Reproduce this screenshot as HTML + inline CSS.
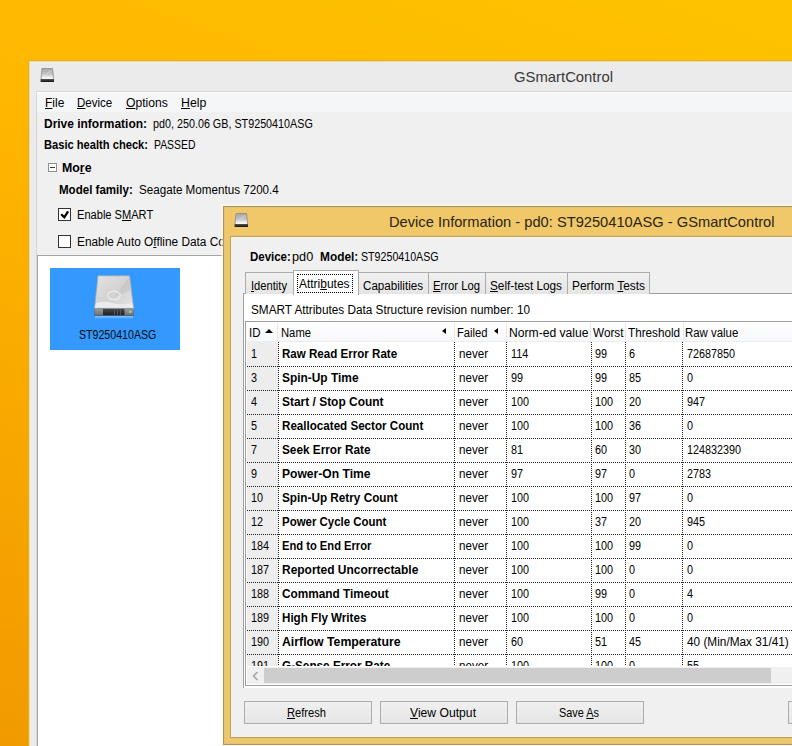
<!DOCTYPE html>
<html><head><meta charset="utf-8"><style>
html,body{margin:0;padding:0;}
body{width:792px;height:746px;overflow:hidden;position:relative;font-family:"Liberation Sans",sans-serif;color:#000;
background:linear-gradient(200deg,#FEC300 0%,#FFB800 35%,#F8A700 70%,#F09A00 100%);}
.t{position:absolute;white-space:pre;transform-origin:0 0;}
.r{position:absolute;}
u{text-decoration:underline;text-underline-offset:1px;}
</style></head><body>
<div class="r" style="left:28px;top:60px;width:800px;height:700px;background:#E0AE2C;"></div>
<div class="r" style="left:29px;top:61px;width:800px;height:700px;background:#EEDAA4;"></div>
<div class="r" style="left:30px;top:62px;width:800px;height:700px;background:#F3EEE0;"></div>
<div class="r" style="left:31px;top:63px;width:800px;height:700px;background:#EBEBEB;"></div>
<svg class="r" style="left:39px;top:67px" width="16" height="16" viewBox="0 0 16 16">
<defs><linearGradient id="sg39" x1="0" y1="0" x2="0" y2="1"><stop offset="0" stop-color="#a5a5a5"/><stop offset="0.55" stop-color="#c8c8c8"/><stop offset="0.8" stop-color="#f0f0f0"/><stop offset="1" stop-color="#fafafa"/></linearGradient>
<linearGradient id="sb39" x1="0" y1="0" x2="0" y2="1"><stop offset="0" stop-color="#555"/><stop offset="1" stop-color="#111"/></linearGradient></defs>
<path d="M3 1.5 H13.6 L14.6 12.5 H2 Z" fill="url(#sg39)" stroke="#8a8a8a" stroke-width="0.8"/>
<path d="M4 10 L12.5 3" stroke="#dcdcdc" stroke-width="0.9" opacity="0.8"/>
<rect x="1.6" y="12" width="13.4" height="3" fill="url(#sb39)"/>
</svg>
<div class="t" style="left:513.80px;top:68.30px;font-size:15px;line-height:17px;color:#383838;transform:scaleX(0.9897);">GSmartControl</div>
<div class="r" style="left:36px;top:91px;width:800px;height:700px;background:#D7D7D7;"></div>
<div class="r" style="left:37px;top:92px;width:800px;height:700px;background:#F0F0F0;"></div>
<div class="r" style="left:37px;top:92px;width:800px;height:20px;background:#F5F6F7;"></div>
<div class="r" style="left:37px;top:92px;width:800px;height:1px;background:#FFFFFF;"></div>
<div class="t" style="left:44.80px;top:95.54px;font-size:12px;line-height:14px;transform:scaleX(0.9982);"><u>F</u>ile</div>
<div class="t" style="left:76.70px;top:95.54px;font-size:12px;line-height:14px;transform:scaleX(0.9597);"><u>D</u>evice</div>
<div class="t" style="left:125.70px;top:95.54px;font-size:12px;line-height:14px;transform:scaleX(1.0108);"><u>O</u>ptions</div>
<div class="t" style="left:181.30px;top:95.54px;font-size:12px;line-height:14px;transform:scaleX(1.0252);"><u>H</u>elp</div>
<div class="t" style="left:43.50px;top:116.84px;font-size:12px;line-height:14px;font-weight:bold;transform:scaleX(0.9967);">Drive information:</div>
<div class="t" style="left:153.10px;top:116.84px;font-size:12px;line-height:14px;transform:scaleX(0.8971);">pd0, 250.06 GB, ST9250410ASG</div>
<div class="t" style="left:43.50px;top:137.84px;font-size:12px;line-height:14px;font-weight:bold;transform:scaleX(0.9282);">Basic health check:</div>
<div class="t" style="left:154.10px;top:137.84px;font-size:12px;line-height:14px;transform:scaleX(0.8682);">PASSED</div>
<div class="r" style="left:48px;top:163px;width:9px;height:9px;box-sizing:border-box;border:1px solid #8E8E8E;background:#fff;"></div>
<div class="r" style="left:50px;top:167px;width:5px;height:1px;background:#3a3a3a;"></div>
<div class="t" style="left:62.10px;top:161.44px;font-size:12px;line-height:14px;font-weight:bold;transform:scaleX(1.0289);">Mo<u>r</u>e</div>
<div class="t" style="left:58.50px;top:183.04px;font-size:12px;line-height:14px;font-weight:bold;transform:scaleX(0.9625);">Model family:</div>
<div class="t" style="left:138.80px;top:183.04px;font-size:12px;line-height:14px;transform:scaleX(0.9702);">Seagate Momentus 7200.4</div>
<div class="r" style="left:58px;top:208px;width:13px;height:13px;box-sizing:border-box;border:1px solid #333;background:#fff;"></div>
<svg class="r" style="left:58px;top:208px" width="13" height="13" viewBox="0 0 13 13"><path d="M3.2 6.3 L6.3 9.3 L10.1 3.3" fill="none" stroke="#000" stroke-width="2.2" stroke-linejoin="miter"/></svg>
<div class="t" style="left:76.90px;top:207.74px;font-size:12px;line-height:14px;transform:scaleX(0.9238);">Enable S<u>M</u>ART</div>
<div class="r" style="left:58px;top:235px;width:13px;height:13px;box-sizing:border-box;border:1px solid #333;background:#fff;"></div>
<div class="t" style="left:76.90px;top:234.64px;font-size:12px;line-height:14px;transform:scaleX(0.9860);">Enable Auto O<u>f</u>fline Data Collection</div>
<div class="r" style="left:37px;top:255px;width:800px;height:700px;background:#A5A5A5;"></div>
<div class="r" style="left:38px;top:256px;width:800px;height:700px;background:#FFFFFF;"></div>
<div class="r" style="left:50px;top:268px;width:130px;height:82px;background:#3399FF;"></div>
<svg class="r" style="left:90px;top:272px" width="48" height="50" viewBox="0 0 48 50">
<defs>
<linearGradient id="bt" x1="0" y1="0" x2="1" y2="1"><stop offset="0" stop-color="#e4e4e4"/><stop offset="0.5" stop-color="#d2d2d2"/><stop offset="1" stop-color="#e2e2e2"/></linearGradient>
<linearGradient id="bf" x1="0" y1="0" x2="0" y2="1"><stop offset="0" stop-color="#4a4a4a"/><stop offset="1" stop-color="#1e1e1e"/></linearGradient>
<linearGradient id="be" x1="0" y1="0" x2="0" y2="1"><stop offset="0" stop-color="#9c9c9c"/><stop offset="1" stop-color="#6f6f6f"/></linearGradient>
<linearGradient id="br" x1="0" y1="0" x2="0" y2="1"><stop offset="0" stop-color="#ffffff" stop-opacity="0.45"/><stop offset="1" stop-color="#ffffff" stop-opacity="0"/></linearGradient>
</defs>
<path d="M8 3.8 H39.6 L43.6 36 H4.6 Z" fill="url(#bt)" stroke="#a8a8a8" stroke-width="0.7"/>
<path d="M24 25 L39.5 5 L41 18 Z" fill="#c4c4c4" opacity="0.7"/>
<ellipse cx="24" cy="23.5" rx="6.3" ry="4.3" fill="none" stroke="#eeeeee" stroke-width="1.1"/>
<path d="M6 31 Q14 28.5 22 31 T42 31 L43.3 35.5 H4.9 Z" fill="#ececec"/>
<rect x="4.6" y="35.6" width="39" height="1" fill="#fafafa"/>
<rect x="4.6" y="36.5" width="39" height="7" fill="url(#bf)"/>
<rect x="4.6" y="36.5" width="8.4" height="7" fill="url(#be)"/>
<rect x="34.4" y="36.5" width="9.2" height="7" fill="url(#be)"/>
<rect x="24" y="37" width="1" height="6" fill="#555"/><rect x="27" y="37" width="1" height="6" fill="#555"/><rect x="30" y="37" width="1" height="6" fill="#555"/>
<circle cx="40.3" cy="39.8" r="1.3" fill="#9be38a"/>
<rect x="5" y="44" width="38" height="3" fill="url(#br)"/>
</svg>
<div class="t" style="left:78.50px;top:328.34px;font-size:12px;line-height:14px;color:#0a0a0a;transform:scaleX(0.8845);">ST9250410ASG</div>
<div class="r" style="left:221px;top:204px;width:800px;height:543px;background:rgba(255,248,232,0.6);"></div>
<div class="r" style="left:223px;top:206px;width:800px;height:539px;background:#AD9560;"></div>
<div class="r" style="left:224px;top:207px;width:800px;height:537px;background:#E2C274;"></div>
<div class="r" style="left:225px;top:208px;width:800px;height:535px;background:#F0C869;"></div>
<svg class="r" style="left:233px;top:212px" width="16" height="16" viewBox="0 0 16 16">
<defs><linearGradient id="sg233" x1="0" y1="0" x2="0" y2="1"><stop offset="0" stop-color="#a5a5a5"/><stop offset="0.55" stop-color="#c8c8c8"/><stop offset="0.8" stop-color="#f0f0f0"/><stop offset="1" stop-color="#fafafa"/></linearGradient>
<linearGradient id="sb233" x1="0" y1="0" x2="0" y2="1"><stop offset="0" stop-color="#555"/><stop offset="1" stop-color="#111"/></linearGradient></defs>
<path d="M3 1.5 H13.6 L14.6 12.5 H2 Z" fill="url(#sg233)" stroke="#8a8a8a" stroke-width="0.8"/>
<path d="M4 10 L12.5 3" stroke="#dcdcdc" stroke-width="0.9" opacity="0.8"/>
<rect x="1.6" y="12" width="13.4" height="3" fill="url(#sb233)"/>
</svg>
<div class="t" style="left:389.10px;top:213.00px;font-size:15px;line-height:17px;color:#2a2416;transform:scaleX(0.9776);">Device Information - pd0: ST9250410ASG - GSmartControl</div>
<div class="r" style="left:229px;top:235px;width:800px;height:504px;background:#E3C47A;"></div>
<div class="r" style="left:230px;top:236px;width:800px;height:502px;background:#BFA062;"></div>
<div class="r" style="left:231px;top:237px;width:800px;height:500px;background:#FFF5DC;"></div>
<div class="r" style="left:232px;top:238px;width:800px;height:498px;background:#F2F1EC;"></div>
<div class="r" style="left:233px;top:239px;width:800px;height:496px;background:#F0F0F0;"></div>
<div class="t" style="left:249.60px;top:250.04px;font-size:12px;line-height:14px;font-weight:bold;transform:scaleX(0.9557);">Device:</div>
<div class="t" style="left:291.80px;top:250.04px;font-size:12px;line-height:14px;transform:scaleX(1.0589);">pd0</div>
<div class="t" style="left:320.30px;top:250.04px;font-size:12px;line-height:14px;font-weight:bold;transform:scaleX(0.9907);">Model:</div>
<div class="t" style="left:360.70px;top:250.04px;font-size:12px;line-height:14px;transform:scaleX(0.8880);">ST9250410ASG</div>
<div class="r" style="left:243px;top:293px;width:800px;height:395px;background:#A0A0A0;"></div>
<div class="r" style="left:244px;top:294px;width:800px;height:394px;background:#FFFFFF;"></div>
<div class="r" style="left:245px;top:272px;width:49px;height:22px;box-sizing:border-box;border:1px solid #ACACAC;border-bottom:none;background:linear-gradient(#F0F0F0,#E5E5E5);"></div>
<div class="t" style="left:251.00px;top:278.54px;font-size:12px;line-height:14px;transform:scaleX(0.9305);"><u>I</u>dentity</div>
<div class="r" style="left:358px;top:272px;width:71px;height:22px;box-sizing:border-box;border:1px solid #ACACAC;border-bottom:none;background:linear-gradient(#F0F0F0,#E5E5E5);"></div>
<div class="t" style="left:362.80px;top:278.54px;font-size:12px;line-height:14px;transform:scaleX(0.9673);">Capabilities</div>
<div class="r" style="left:428px;top:272px;width:58px;height:22px;box-sizing:border-box;border:1px solid #ACACAC;border-bottom:none;background:linear-gradient(#F0F0F0,#E5E5E5);"></div>
<div class="t" style="left:433.30px;top:278.54px;font-size:12px;line-height:14px;transform:scaleX(0.9396);"><u>E</u>rror Log</div>
<div class="r" style="left:485px;top:272px;width:83px;height:22px;box-sizing:border-box;border:1px solid #ACACAC;border-bottom:none;background:linear-gradient(#F0F0F0,#E5E5E5);"></div>
<div class="t" style="left:490.30px;top:278.54px;font-size:12px;line-height:14px;transform:scaleX(0.9813);"><u>S</u>elf-test Logs</div>
<div class="r" style="left:567px;top:272px;width:83px;height:22px;box-sizing:border-box;border:1px solid #ACACAC;border-bottom:none;background:linear-gradient(#F0F0F0,#E5E5E5);"></div>
<div class="t" style="left:572.30px;top:278.54px;font-size:12px;line-height:14px;transform:scaleX(0.9891);">Perform <u>T</u>ests</div>
<div class="r" style="left:293px;top:270px;width:66px;height:25px;box-sizing:border-box;border:1px solid #ACACAC;border-bottom:none;background:#FFFFFF;"></div>
<div class="r" style="left:297px;top:274px;width:56px;height:19px;box-sizing:border-box;border:1px dotted #000;"></div>
<div class="t" style="left:299.30px;top:277.34px;font-size:12px;line-height:14px;transform:scaleX(0.9962);">Attri<u>b</u>utes</div>
<div class="t" style="left:250.70px;top:303.34px;font-size:12px;line-height:14px;transform:scaleX(0.9812);">SMART Attributes Data Structure revision number: 10</div>
<div class="r" style="left:245px;top:321px;width:800px;height:365px;background:#A0A0A0;"></div>
<div class="r" style="left:246px;top:322px;width:800px;height:363px;background:#FFFFFF;"></div>
<div class="r" style="left:246px;top:322px;width:800px;height:20px;background:linear-gradient(#FFFFFF,#F7F8FA);"></div>
<div class="r" style="left:277px;top:323px;width:1px;height:18px;background:#E8E8E8;"></div>
<div class="r" style="left:454px;top:323px;width:1px;height:18px;background:#E8E8E8;"></div>
<div class="r" style="left:506px;top:323px;width:1px;height:18px;background:#E8E8E8;"></div>
<div class="r" style="left:590px;top:323px;width:1px;height:18px;background:#E8E8E8;"></div>
<div class="r" style="left:625px;top:323px;width:1px;height:18px;background:#E8E8E8;"></div>
<div class="r" style="left:683px;top:323px;width:1px;height:18px;background:#E8E8E8;"></div>
<div class="r" style="left:246px;top:341px;width:800px;height:1px;background:#EDEDED;"></div>
<div class="t" style="left:248.90px;top:325.54px;font-size:12px;line-height:14px;transform:scaleX(0.9583);">ID</div>
<div class="r" style="left:265px;top:329px;width:0;height:0;border-left:4px solid transparent;border-right:4px solid transparent;border-bottom:4px solid #000;"></div>
<div class="t" style="left:281.20px;top:325.54px;font-size:12px;line-height:14px;transform:scaleX(0.9372);">Name</div>
<div class="r" style="left:442px;top:328px;width:0;height:0;border-top:3.5px solid transparent;border-bottom:3.5px solid transparent;border-right:4px solid #000;"></div>
<div class="t" style="left:456.80px;top:325.54px;font-size:12px;line-height:14px;transform:scaleX(0.9333);">Failed</div>
<div class="r" style="left:494px;top:328px;width:0;height:0;border-top:3.5px solid transparent;border-bottom:3.5px solid transparent;border-right:4px solid #000;"></div>
<div class="t" style="left:508.60px;top:325.54px;font-size:12px;line-height:14px;transform:scaleX(1.0102);">Norm-ed value</div>
<div class="t" style="left:593.30px;top:325.54px;font-size:12px;line-height:14px;transform:scaleX(0.9803);">Worst</div>
<div class="t" style="left:628.10px;top:325.54px;font-size:12px;line-height:14px;transform:scaleX(0.9745);">Threshold</div>
<div class="t" style="left:685.10px;top:325.54px;font-size:12px;line-height:14px;transform:scaleX(0.9514);">Raw value</div>
<div class="r" style="left:246px;top:342px;width:546px;height:324px;overflow:hidden">
<div class="r" style="left:1px;top:0px;width:31px;height:324px;background:#EDEDED;"></div>
<div class="r" style="left:1px;top:24px;width:545px;height:1px;background:repeating-linear-gradient(to right,rgba(0,0,0,0.85) 0 1px,transparent 1px 2px);"></div>
<div class="r" style="left:1px;top:48px;width:545px;height:1px;background:repeating-linear-gradient(to right,rgba(0,0,0,0.85) 0 1px,transparent 1px 2px);"></div>
<div class="r" style="left:1px;top:72px;width:545px;height:1px;background:repeating-linear-gradient(to right,rgba(0,0,0,0.85) 0 1px,transparent 1px 2px);"></div>
<div class="r" style="left:1px;top:96px;width:545px;height:1px;background:repeating-linear-gradient(to right,rgba(0,0,0,0.85) 0 1px,transparent 1px 2px);"></div>
<div class="r" style="left:1px;top:120px;width:545px;height:1px;background:repeating-linear-gradient(to right,rgba(0,0,0,0.85) 0 1px,transparent 1px 2px);"></div>
<div class="r" style="left:1px;top:144px;width:545px;height:1px;background:repeating-linear-gradient(to right,rgba(0,0,0,0.85) 0 1px,transparent 1px 2px);"></div>
<div class="r" style="left:1px;top:168px;width:545px;height:1px;background:repeating-linear-gradient(to right,rgba(0,0,0,0.85) 0 1px,transparent 1px 2px);"></div>
<div class="r" style="left:1px;top:192px;width:545px;height:1px;background:repeating-linear-gradient(to right,rgba(0,0,0,0.85) 0 1px,transparent 1px 2px);"></div>
<div class="r" style="left:1px;top:216px;width:545px;height:1px;background:repeating-linear-gradient(to right,rgba(0,0,0,0.85) 0 1px,transparent 1px 2px);"></div>
<div class="r" style="left:1px;top:240px;width:545px;height:1px;background:repeating-linear-gradient(to right,rgba(0,0,0,0.85) 0 1px,transparent 1px 2px);"></div>
<div class="r" style="left:1px;top:264px;width:545px;height:1px;background:repeating-linear-gradient(to right,rgba(0,0,0,0.85) 0 1px,transparent 1px 2px);"></div>
<div class="r" style="left:1px;top:288px;width:545px;height:1px;background:repeating-linear-gradient(to right,rgba(0,0,0,0.85) 0 1px,transparent 1px 2px);"></div>
<div class="r" style="left:1px;top:312px;width:545px;height:1px;background:repeating-linear-gradient(to right,rgba(0,0,0,0.85) 0 1px,transparent 1px 2px);"></div>
<div class="r" style="left:1px;top:336px;width:545px;height:1px;background:repeating-linear-gradient(to right,rgba(0,0,0,0.85) 0 1px,transparent 1px 2px);"></div>
<div class="r" style="left:32px;top:0px;width:1px;height:324px;background:repeating-linear-gradient(to bottom,rgba(0,0,0,0.85) 0 1px,transparent 1px 2px);"></div>
<div class="r" style="left:208px;top:0px;width:1px;height:324px;background:repeating-linear-gradient(to bottom,rgba(0,0,0,0.85) 0 1px,transparent 1px 2px);"></div>
<div class="r" style="left:260px;top:0px;width:1px;height:324px;background:repeating-linear-gradient(to bottom,rgba(0,0,0,0.85) 0 1px,transparent 1px 2px);"></div>
<div class="r" style="left:345px;top:0px;width:1px;height:324px;background:repeating-linear-gradient(to bottom,rgba(0,0,0,0.85) 0 1px,transparent 1px 2px);"></div>
<div class="r" style="left:379px;top:0px;width:1px;height:324px;background:repeating-linear-gradient(to bottom,rgba(0,0,0,0.85) 0 1px,transparent 1px 2px);"></div>
<div class="r" style="left:436px;top:0px;width:1px;height:324px;background:repeating-linear-gradient(to bottom,rgba(0,0,0,0.85) 0 1px,transparent 1px 2px);"></div>
<div class="t" style="left:5.10px;top:4.54px;font-size:12px;line-height:14px;transform:scaleX(0.9000);">1</div>
<div class="t" style="left:36.30px;top:4.54px;font-size:12px;line-height:14px;font-weight:bold;transform:scaleX(0.9642);">Raw Read Error Rate</div>
<div class="t" style="left:212.80px;top:4.54px;font-size:12px;line-height:14px;transform:scaleX(0.9661);">never</div>
<div class="t" style="left:264.90px;top:4.54px;font-size:12px;line-height:14px;transform:scaleX(0.9000);">114</div>
<div class="t" style="left:348.50px;top:4.54px;font-size:12px;line-height:14px;transform:scaleX(0.9000);">99</div>
<div class="t" style="left:383.30px;top:4.54px;font-size:12px;line-height:14px;transform:scaleX(0.9000);">6</div>
<div class="t" style="left:440.80px;top:4.54px;font-size:12px;line-height:14px;transform:scaleX(0.9000);">72687850</div>
<div class="t" style="left:5.10px;top:28.54px;font-size:12px;line-height:14px;transform:scaleX(0.9000);">3</div>
<div class="t" style="left:36.30px;top:28.54px;font-size:12px;line-height:14px;font-weight:bold;transform:scaleX(0.9920);">Spin-Up Time</div>
<div class="t" style="left:212.80px;top:28.54px;font-size:12px;line-height:14px;transform:scaleX(0.9661);">never</div>
<div class="t" style="left:264.90px;top:28.54px;font-size:12px;line-height:14px;transform:scaleX(0.9000);">99</div>
<div class="t" style="left:348.50px;top:28.54px;font-size:12px;line-height:14px;transform:scaleX(0.9000);">99</div>
<div class="t" style="left:383.30px;top:28.54px;font-size:12px;line-height:14px;transform:scaleX(0.9000);">85</div>
<div class="t" style="left:440.80px;top:28.54px;font-size:12px;line-height:14px;transform:scaleX(0.9000);">0</div>
<div class="t" style="left:5.10px;top:52.54px;font-size:12px;line-height:14px;transform:scaleX(0.9000);">4</div>
<div class="t" style="left:36.30px;top:52.54px;font-size:12px;line-height:14px;font-weight:bold;transform:scaleX(0.9952);">Start / Stop Count</div>
<div class="t" style="left:212.80px;top:52.54px;font-size:12px;line-height:14px;transform:scaleX(0.9661);">never</div>
<div class="t" style="left:264.90px;top:52.54px;font-size:12px;line-height:14px;transform:scaleX(0.9000);">100</div>
<div class="t" style="left:348.50px;top:52.54px;font-size:12px;line-height:14px;transform:scaleX(0.9000);">100</div>
<div class="t" style="left:383.30px;top:52.54px;font-size:12px;line-height:14px;transform:scaleX(0.9000);">20</div>
<div class="t" style="left:440.80px;top:52.54px;font-size:12px;line-height:14px;transform:scaleX(0.9000);">947</div>
<div class="t" style="left:5.10px;top:76.54px;font-size:12px;line-height:14px;transform:scaleX(0.9000);">5</div>
<div class="t" style="left:36.30px;top:76.54px;font-size:12px;line-height:14px;font-weight:bold;transform:scaleX(0.9676);">Reallocated Sector Count</div>
<div class="t" style="left:212.80px;top:76.54px;font-size:12px;line-height:14px;transform:scaleX(0.9661);">never</div>
<div class="t" style="left:264.90px;top:76.54px;font-size:12px;line-height:14px;transform:scaleX(0.9000);">100</div>
<div class="t" style="left:348.50px;top:76.54px;font-size:12px;line-height:14px;transform:scaleX(0.9000);">100</div>
<div class="t" style="left:383.30px;top:76.54px;font-size:12px;line-height:14px;transform:scaleX(0.9000);">36</div>
<div class="t" style="left:440.80px;top:76.54px;font-size:12px;line-height:14px;transform:scaleX(0.9000);">0</div>
<div class="t" style="left:5.10px;top:100.54px;font-size:12px;line-height:14px;transform:scaleX(0.9000);">7</div>
<div class="t" style="left:36.30px;top:100.54px;font-size:12px;line-height:14px;font-weight:bold;transform:scaleX(0.9828);">Seek Error Rate</div>
<div class="t" style="left:212.80px;top:100.54px;font-size:12px;line-height:14px;transform:scaleX(0.9661);">never</div>
<div class="t" style="left:264.90px;top:100.54px;font-size:12px;line-height:14px;transform:scaleX(0.9000);">81</div>
<div class="t" style="left:348.50px;top:100.54px;font-size:12px;line-height:14px;transform:scaleX(0.9000);">60</div>
<div class="t" style="left:383.30px;top:100.54px;font-size:12px;line-height:14px;transform:scaleX(0.9000);">30</div>
<div class="t" style="left:440.80px;top:100.54px;font-size:12px;line-height:14px;transform:scaleX(0.9000);">124832390</div>
<div class="t" style="left:5.10px;top:124.54px;font-size:12px;line-height:14px;transform:scaleX(0.9000);">9</div>
<div class="t" style="left:36.30px;top:124.54px;font-size:12px;line-height:14px;font-weight:bold;transform:scaleX(1.0080);">Power-On Time</div>
<div class="t" style="left:212.80px;top:124.54px;font-size:12px;line-height:14px;transform:scaleX(0.9661);">never</div>
<div class="t" style="left:264.90px;top:124.54px;font-size:12px;line-height:14px;transform:scaleX(0.9000);">97</div>
<div class="t" style="left:348.50px;top:124.54px;font-size:12px;line-height:14px;transform:scaleX(0.9000);">97</div>
<div class="t" style="left:383.30px;top:124.54px;font-size:12px;line-height:14px;transform:scaleX(0.9000);">0</div>
<div class="t" style="left:440.80px;top:124.54px;font-size:12px;line-height:14px;transform:scaleX(0.9000);">2783</div>
<div class="t" style="left:5.10px;top:148.54px;font-size:12px;line-height:14px;transform:scaleX(0.9000);">10</div>
<div class="t" style="left:36.30px;top:148.54px;font-size:12px;line-height:14px;font-weight:bold;transform:scaleX(0.9797);">Spin-Up Retry Count</div>
<div class="t" style="left:212.80px;top:148.54px;font-size:12px;line-height:14px;transform:scaleX(0.9661);">never</div>
<div class="t" style="left:264.90px;top:148.54px;font-size:12px;line-height:14px;transform:scaleX(0.9000);">100</div>
<div class="t" style="left:348.50px;top:148.54px;font-size:12px;line-height:14px;transform:scaleX(0.9000);">100</div>
<div class="t" style="left:383.30px;top:148.54px;font-size:12px;line-height:14px;transform:scaleX(0.9000);">97</div>
<div class="t" style="left:440.80px;top:148.54px;font-size:12px;line-height:14px;transform:scaleX(0.9000);">0</div>
<div class="t" style="left:5.10px;top:172.54px;font-size:12px;line-height:14px;transform:scaleX(0.9000);">12</div>
<div class="t" style="left:36.30px;top:172.54px;font-size:12px;line-height:14px;font-weight:bold;transform:scaleX(0.9547);">Power Cycle Count</div>
<div class="t" style="left:212.80px;top:172.54px;font-size:12px;line-height:14px;transform:scaleX(0.9661);">never</div>
<div class="t" style="left:264.90px;top:172.54px;font-size:12px;line-height:14px;transform:scaleX(0.9000);">100</div>
<div class="t" style="left:348.50px;top:172.54px;font-size:12px;line-height:14px;transform:scaleX(0.9000);">37</div>
<div class="t" style="left:383.30px;top:172.54px;font-size:12px;line-height:14px;transform:scaleX(0.9000);">20</div>
<div class="t" style="left:440.80px;top:172.54px;font-size:12px;line-height:14px;transform:scaleX(0.9000);">945</div>
<div class="t" style="left:5.10px;top:196.54px;font-size:12px;line-height:14px;transform:scaleX(0.9000);">184</div>
<div class="t" style="left:36.30px;top:196.54px;font-size:12px;line-height:14px;font-weight:bold;transform:scaleX(0.9312);">End to End Error</div>
<div class="t" style="left:212.80px;top:196.54px;font-size:12px;line-height:14px;transform:scaleX(0.9661);">never</div>
<div class="t" style="left:264.90px;top:196.54px;font-size:12px;line-height:14px;transform:scaleX(0.9000);">100</div>
<div class="t" style="left:348.50px;top:196.54px;font-size:12px;line-height:14px;transform:scaleX(0.9000);">100</div>
<div class="t" style="left:383.30px;top:196.54px;font-size:12px;line-height:14px;transform:scaleX(0.9000);">99</div>
<div class="t" style="left:440.80px;top:196.54px;font-size:12px;line-height:14px;transform:scaleX(0.9000);">0</div>
<div class="t" style="left:5.10px;top:220.54px;font-size:12px;line-height:14px;transform:scaleX(0.9000);">187</div>
<div class="t" style="left:36.30px;top:220.54px;font-size:12px;line-height:14px;font-weight:bold;transform:scaleX(0.9971);">Reported Uncorrectable</div>
<div class="t" style="left:212.80px;top:220.54px;font-size:12px;line-height:14px;transform:scaleX(0.9661);">never</div>
<div class="t" style="left:264.90px;top:220.54px;font-size:12px;line-height:14px;transform:scaleX(0.9000);">100</div>
<div class="t" style="left:348.50px;top:220.54px;font-size:12px;line-height:14px;transform:scaleX(0.9000);">100</div>
<div class="t" style="left:383.30px;top:220.54px;font-size:12px;line-height:14px;transform:scaleX(0.9000);">0</div>
<div class="t" style="left:440.80px;top:220.54px;font-size:12px;line-height:14px;transform:scaleX(0.9000);">0</div>
<div class="t" style="left:5.10px;top:244.54px;font-size:12px;line-height:14px;transform:scaleX(0.9000);">188</div>
<div class="t" style="left:36.30px;top:244.54px;font-size:12px;line-height:14px;font-weight:bold;transform:scaleX(0.9839);">Command Timeout</div>
<div class="t" style="left:212.80px;top:244.54px;font-size:12px;line-height:14px;transform:scaleX(0.9661);">never</div>
<div class="t" style="left:264.90px;top:244.54px;font-size:12px;line-height:14px;transform:scaleX(0.9000);">100</div>
<div class="t" style="left:348.50px;top:244.54px;font-size:12px;line-height:14px;transform:scaleX(0.9000);">99</div>
<div class="t" style="left:383.30px;top:244.54px;font-size:12px;line-height:14px;transform:scaleX(0.9000);">0</div>
<div class="t" style="left:440.80px;top:244.54px;font-size:12px;line-height:14px;transform:scaleX(0.9000);">4</div>
<div class="t" style="left:5.10px;top:268.54px;font-size:12px;line-height:14px;transform:scaleX(0.9000);">189</div>
<div class="t" style="left:36.30px;top:268.54px;font-size:12px;line-height:14px;font-weight:bold;transform:scaleX(0.9687);">High Fly Writes</div>
<div class="t" style="left:212.80px;top:268.54px;font-size:12px;line-height:14px;transform:scaleX(0.9661);">never</div>
<div class="t" style="left:264.90px;top:268.54px;font-size:12px;line-height:14px;transform:scaleX(0.9000);">100</div>
<div class="t" style="left:348.50px;top:268.54px;font-size:12px;line-height:14px;transform:scaleX(0.9000);">100</div>
<div class="t" style="left:383.30px;top:268.54px;font-size:12px;line-height:14px;transform:scaleX(0.9000);">0</div>
<div class="t" style="left:440.80px;top:268.54px;font-size:12px;line-height:14px;transform:scaleX(0.9000);">0</div>
<div class="t" style="left:5.10px;top:292.54px;font-size:12px;line-height:14px;transform:scaleX(0.9000);">190</div>
<div class="t" style="left:36.30px;top:292.54px;font-size:12px;line-height:14px;font-weight:bold;transform:scaleX(1.0233);">Airflow Temperature</div>
<div class="t" style="left:212.80px;top:292.54px;font-size:12px;line-height:14px;transform:scaleX(0.9661);">never</div>
<div class="t" style="left:264.90px;top:292.54px;font-size:12px;line-height:14px;transform:scaleX(0.9000);">60</div>
<div class="t" style="left:348.50px;top:292.54px;font-size:12px;line-height:14px;transform:scaleX(0.9000);">51</div>
<div class="t" style="left:383.30px;top:292.54px;font-size:12px;line-height:14px;transform:scaleX(0.9000);">45</div>
<div class="t" style="left:440.80px;top:292.54px;font-size:12px;line-height:14px;transform:scaleX(0.9847);">40 (Min/Max 31/41)</div>
<div class="t" style="left:5.10px;top:316.54px;font-size:12px;line-height:14px;transform:scaleX(0.9000);">191</div>
<div class="t" style="left:36.30px;top:316.54px;font-size:12px;line-height:14px;font-weight:bold;transform:scaleX(0.9782);">G-Sense Error Rate</div>
<div class="t" style="left:212.80px;top:316.54px;font-size:12px;line-height:14px;transform:scaleX(0.9661);">never</div>
<div class="t" style="left:264.90px;top:316.54px;font-size:12px;line-height:14px;transform:scaleX(0.9000);">100</div>
<div class="t" style="left:348.50px;top:316.54px;font-size:12px;line-height:14px;transform:scaleX(0.9000);">100</div>
<div class="t" style="left:383.30px;top:316.54px;font-size:12px;line-height:14px;transform:scaleX(0.9000);">0</div>
<div class="t" style="left:440.80px;top:316.54px;font-size:12px;line-height:14px;transform:scaleX(0.9000);">55</div>
</div>
<div class="r" style="left:246px;top:666px;width:800px;height:19px;background:#FFFFFF;"></div>
<div class="r" style="left:247px;top:667px;width:800px;height:17px;background:#F0F0F0;"></div>
<div class="r" style="left:264px;top:668px;width:507px;height:15px;background:#CDCDCD;"></div>
<svg class="r" style="left:251px;top:670px" width="10" height="12" viewBox="0 0 10 12"><path d="M6.5 2 L2.5 6 L6.5 10" fill="none" stroke="#A6A6A6" stroke-width="1.6"/></svg>
<div class="r" style="left:244px;top:701px;width:128px;height:23px;box-sizing:border-box;border:1px solid #ACACAC;background:linear-gradient(#F0F0F0,#E5E5E5);"></div>
<div class="t" style="left:287.30px;top:705.74px;font-size:12px;line-height:14px;transform:scaleX(0.9282);"><u>R</u>efresh</div>
<div class="r" style="left:380px;top:701px;width:128px;height:23px;box-sizing:border-box;border:1px solid #ACACAC;background:linear-gradient(#F0F0F0,#E5E5E5);"></div>
<div class="t" style="left:410.30px;top:705.74px;font-size:12px;line-height:14px;transform:scaleX(1.0130);"><u>V</u>iew Output</div>
<div class="r" style="left:516px;top:701px;width:128px;height:23px;box-sizing:border-box;border:1px solid #ACACAC;background:linear-gradient(#F0F0F0,#E5E5E5);"></div>
<div class="t" style="left:559.30px;top:705.74px;font-size:12px;line-height:14px;transform:scaleX(0.9085);">Save <u>A</u>s</div>
<div class="r" style="left:788px;top:701px;width:128px;height:23px;box-sizing:border-box;border:1px solid #ACACAC;background:linear-gradient(#F0F0F0,#E5E5E5);"></div>
<div class="t" style="left:819.30px;top:705.74px;font-size:12px;line-height:14px;transform:scaleX(1.3039);">Close</div>
</body></html>
